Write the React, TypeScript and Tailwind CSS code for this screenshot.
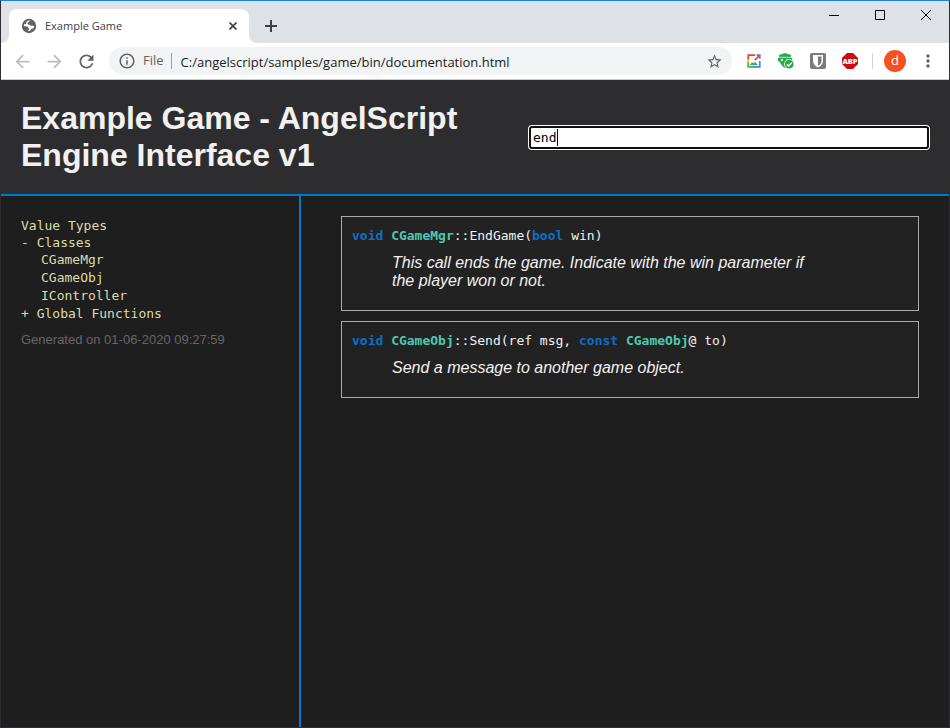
import { useState } from "react";
import type { ReactNode } from "react";
import { MdArrowBack, MdArrowForward, MdInfoOutline, MdMoreVert, MdRefresh, MdStarBorder } from "react-icons/md";

const mono = "font-['DejaVu_Sans_Mono',monospace]";

function TabStrip() {
  return (
    <div className="flex h-[42px] bg-[#dee1e6] pl-2 text-[#3c4043]">
      <div className="relative mt-2 flex w-60 items-center rounded-t-lg bg-white px-3">
        <svg className="absolute bottom-0 -left-2 size-2" viewBox="0 0 8 8" aria-hidden="true">
          <path d="M8 0v8H0a8 8 0 0 0 8-8z" fill="#fff" />
        </svg>
        <svg className="absolute bottom-0 -right-2 size-2" viewBox="0 0 8 8" aria-hidden="true">
          <path d="M0 0v8h8a8 8 0 0 1-8-8z" fill="#fff" />
        </svg>
        <svg className="size-4" viewBox="0 0 16 16" aria-hidden="true">
          <circle cx="8" cy="8" r="7.200" fill="#5f6368" />
          <path d="M9.500 2.700C8 3 8.300 4 7.300 4.300 6.300 4.700 6.200 6 7.200 6.400c.9.300 1.700 0 2.300.8.500.6 1.300.7 3.700.6-.1 1.200-.5 2.200-1.200 3-.9-.5-1.500-.2-1.900.5-.4.900-1.200 1.600-2.600 1.700l-.6-.1c.2-.9 1.100-1 1.200-1.800.1-.9-.5-1-.9-1.600-.4-.8-1.300-1.200-4.300-1.200C2.800 5.500 5 2.700 8 2.600z" fill="#fff" />
          <path d="M3 5.600C4 3.600 5.800 2.600 7.600 2.600 6.800 3.200 5.500 3.400 5.300 4.900 5 6.200 4.200 6.600 3 5.600z" fill="#5f6368" />
        </svg>
        <span className="ml-2 flex-1 text-[11px]">Example Game</span>
        <button aria-label="Close tab">
          <svg className="size-2" viewBox="0 0 8 8"><path d="M.5.5l7 7M7.500.5l-7 7" stroke="currentColor" strokeWidth="1.600" /></svg>
        </button>
      </div>
      <button aria-label="New tab" className="mt-2 ml-4">
        <svg className="size-3" viewBox="0 0 12 12"><path d="M6 0v12M0 6h12" stroke="currentColor" strokeWidth="2" /></svg>
      </button>
      <div className="ml-auto flex h-[28px] items-center text-black">
        <button aria-label="Minimize" className="flex w-[46px] justify-center">
          <svg className="size-[10px]" viewBox="0 0 10 10"><path d="M0 5.500h10" stroke="currentColor" /></svg>
        </button>
        <button aria-label="Maximize" className="flex w-[46px] justify-center">
          <svg className="size-[10px]" viewBox="0 0 10 10"><path d="M.5.5h9v9h-9z" fill="none" stroke="currentColor" /></svg>
        </button>
        <button aria-label="Close" className="flex w-[46px] justify-center">
          <svg className="size-[10px]" viewBox="0 0 10 10"><path d="M0 0l10 10M10 0L0 10" stroke="currentColor" /></svg>
        </button>
      </div>
    </div>
  );
}

function Toolbar() {
  return (
    <div className="flex h-[37px] items-center border-b border-[#c8c9cb] bg-white px-[11px] text-[#5f6368]">
      <div className="flex items-center gap-[11px]">
        <button aria-label="Back"><MdArrowBack className="size-[21px] text-[#babcbe]" /></button>
        <button aria-label="Forward"><MdArrowForward className="size-[21px] text-[#babcbe]" /></button>
        <button aria-label="Reload"><MdRefresh className="size-[21px]" /></button>
      </div>
      <div className="ml-3 flex h-7 flex-1 items-center rounded-full bg-[#f1f3f4] pr-[9px] pl-[9px] text-[13px]">
        <MdInfoOutline className="size-[18px]" />
        <span className="ml-[7px]">File</span>
        <span className="ml-[7px] h-4 w-px bg-[#9aa0a6]" />
        <input aria-label="Address" readOnly value="C:/angelscript/samples/game/bin/documentation.html" className="ml-[9px] h-7 min-w-0 flex-1 bg-transparent pt-0.5 text-[#202124] outline-none" />
        <button aria-label="Bookmark this page"><MdStarBorder className="size-[17px]" /></button>
      </div>
      <div className="ml-3.5 flex items-center gap-4">
        <button aria-label="Image viewer">
          <svg className="size-4" viewBox="0 0 16 16" fill="none" strokeWidth="1.700">
            <path d="M9 2.200H2.200V7" stroke="#ea4335" />
            <path d="M2.200 6v4" stroke="#fbbc05" />
            <path d="M2.200 9.500v4.300H8" stroke="#4caf50" />
            <path d="M7 13.800h6.800V8" stroke="#4285f4" />
            <path d="M10.500 2.200h3.300v3.500" stroke="#4285f4" />
            <path d="M13.500 2.500L8.800 7.200" stroke="#ea4335" />
            <path d="M4 12l2-3 1.500 1.500L9 9l3 3z" fill="#34a853" />
          </svg>
        </button>
        <button aria-label="Site safety">
          <svg className="size-4" viewBox="0 0 16 16">
            <path d="M1 2l6-2 6 2v7l-6 6C3 13 1 9 1 2z" fill="#2ba84a" />
            <path d="M0 5h14v3.500H0z" fill="#2ba84a" />
            <path d="M1 4.300h12" stroke="#fff" strokeWidth=".7" />
            <path d="M3 6l2 2M5 6L3 8M8.500 6l2 2M10.500 6l-2 2" stroke="#fff" strokeWidth="1" />
            <circle cx="11.200" cy="11.200" r="4.800" fill="#2ba84a" stroke="#fff" strokeWidth=".8" />
            <path d="M8.900 11.300l1.700 1.700 3-3.300" fill="none" stroke="#fff" strokeWidth="1.500" />
          </svg>
        </button>
        <button aria-label="Password manager">
          <svg className="size-4" viewBox="0 0 16 16">
            <rect width="16" height="16" rx="2" fill="#7b7b7b" />
            <path d="M3 2h10v6c0 3-2 5-5 6.500C5 13 3 11 3 8z" fill="#fff" />
            <path d="M8 3.500h3.500V8c0 2.200-1.300 3.500-3.500 4.800z" fill="#7b7b7b" />
          </svg>
        </button>
        <button aria-label="Ad blocker">
          <svg className="size-4" viewBox="0 0 16 16">
            <path d="M5 0h6l5 5v6l-5 5H5l-5-5V5z" fill="#c70d12" />
            <text x="8" y="10.700" textAnchor="middle" fontSize="7.500" fontWeight="800" fill="#fff" fontFamily="Open Sans, sans-serif">ABP</text>
          </svg>
        </button>
      </div>
      <span className="ml-3.5 h-4 w-px bg-[#cfd1d4]" />
      <button aria-label="Profile" className="ml-[11px] flex size-[22px] items-center justify-center rounded-full bg-[#f4511e] text-[13px] text-white">d</button>
      <button aria-label="Menu" className="ml-3"><MdMoreVert className="size-5" /></button>
    </div>
  );
}

function NavRow({ children }: { children: ReactNode }) {
  return <a href="#" className="block leading-[17px]">{children}</a>;
}

function Sidebar() {
  return (
    <aside className="w-[300px] shrink-0 border-r-2 border-[#007acc] px-5 pt-[21px] pb-5">
      <nav className={`${mono} text-[13px] text-[#dcdcaa]`}>
        <NavRow>Value Types</NavRow>
        <NavRow>- Classes</NavRow>
        <ul className="pl-5 leading-[18px]">
          {["CGameMgr", "CGameObj", "IController"].map((name) => (
            <li key={name}><a href="#" className="block">{name}</a></li>
          ))}
        </ul>
        <NavRow>+ Global Functions</NavRow>
      </nav>
      <p className="mt-2.5 font-['Liberation_Sans',Arial,sans-serif] text-[13px] leading-4 text-[#666]">Generated on 01-06-2020 09:27:59</p>
    </aside>
  );
}

const Keyword = ({ children }: { children: ReactNode }) => <b className="text-[#0c6fca]">{children}</b>;
const TypeName = ({ children }: { children: ReactNode }) => <b className="text-[#4ec9b0]">{children}</b>;

function Entry({ signature, children }: { signature: ReactNode; children: ReactNode }) {
  return (
    <article className="border border-[#aaa] bg-[#222] p-2.5 text-[#f1f1f1]">
      <code className={`${mono} block text-[13px] leading-[18px]`}>{signature}</code>
      <p className="mt-[9px] mb-2.5 ml-10 max-w-[432px] font-['Liberation_Sans',Arial,sans-serif] text-base leading-[18px] italic">{children}</p>
    </article>
  );
}

export default function App() {
  const [query, setQuery] = useState("end");
  return (
    <div className="flex min-h-screen flex-col border border-[#2d2d30] border-t-[#1883d7] bg-[#1e1e1e] font-['Open_Sans',sans-serif]">
      <TabStrip />
      <Toolbar />
      <header className="flex items-center justify-between gap-5 border-b-2 border-[#007acc] bg-[#2d2d30] p-5">
        <h1 className="max-w-[460px] font-['Liberation_Sans',Arial,sans-serif] text-[32px] leading-[37px] font-bold text-[#f1f1f1]">
          Example Game - AngelScript Engine Interface v1
        </h1>
        <div className="relative w-[400px] shrink-0">
          <input
            aria-label="Search"
            value={query}
            onChange={(e) => setQuery(e.target.value)}
            className={`${mono} block h-[23px] w-full rounded-[3px] border-2 border-[#101010] bg-white px-0.5 text-[13px] leading-[19px] text-black caret-transparent ring-1 ring-white outline-none`}
          />
          <span className="absolute top-[3px] left-7 h-[17px] w-px bg-black" />
        </div>
      </header>
      <div className="flex flex-1">
        <Sidebar />
        <main className="flex flex-1 flex-col gap-2.5 py-5 pr-[30px] pl-10">
          <Entry signature={<><Keyword>void</Keyword> <TypeName>CGameMgr</TypeName>::EndGame(<Keyword>bool</Keyword> win)</>}>
            This call ends the game. Indicate with the win parameter if the player won or not.
          </Entry>
          <Entry signature={<><Keyword>void</Keyword> <TypeName>CGameObj</TypeName>::Send(ref msg, <Keyword>const</Keyword> <TypeName>CGameObj</TypeName>@ to)</>}>
            Send a message to another game object.
          </Entry>
        </main>
      </div>
    </div>
  );
}
